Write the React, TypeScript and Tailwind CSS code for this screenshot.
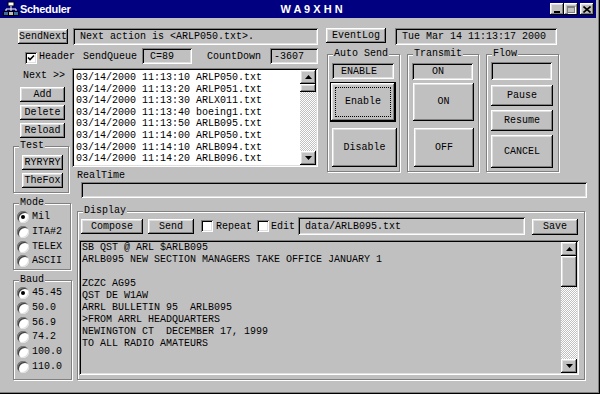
import type { ReactNode } from 'react'

const raised =
  'bg-[#c0c0c0] shadow-[inset_-1px_-1px_#000,inset_1px_1px_#fff,inset_-2px_-2px_#808080,inset_2px_2px_#dfdfdf]'
const sunken =
  'shadow-[inset_1px_1px_#808080,inset_-1px_-1px_#fff,inset_2px_2px_#000,inset_-2px_-2px_#dfdfdf]'

const queue = [
  '03/14/2000 11:13:10 ARLP050.txt',
  '03/14/2000 11:13:20 ARLP051.txt',
  '03/14/2000 11:13:30 ARLX011.txt',
  '03/14/2000 11:13:40 boeing1.txt',
  '03/14/2000 11:13:50 ARLB095.txt',
  '03/14/2000 11:14:00 ARLP050.txt',
  '03/14/2000 11:14:10 ARLB094.txt',
  '03/14/2000 11:14:20 ARLB096.txt',
]

const bulletin = [
  'SB QST @ ARL $ARLB095',
  'ARLB095 NEW SECTION MANAGERS TAKE OFFICE JANUARY 1',
  '',
  'ZCZC AG95',
  'QST DE W1AW',
  'ARRL BULLETIN 95  ARLB095',
  '>FROM ARRL HEADQUARTERS',
  'NEWINGTON CT  DECEMBER 17, 1999',
  'TO ALL RADIO AMATEURS',
]

const Btn = ({ className = '', children }: { className?: string; children?: ReactNode }) => (
  <button type="button" className={`flex shrink-0 items-center justify-center leading-[12px] ${raised} ${className}`}>
    {children}
  </button>
)

const Field = ({ className = '', children }: { className?: string; children?: ReactNode }) => (
  <div className={`flex shrink-0 items-center whitespace-pre bg-[#c0c0c0] ${sunken} ${className}`}>{children}</div>
)

const Group = ({ label, className = '', children }: { label: string; className?: string; children?: ReactNode }) => (
  <div className={`relative shrink-0 border border-[#808080] shadow-[inset_1px_1px_#fff,1px_1px_#fff] ${className}`}>
    <span className="absolute left-[5px] top-[-7px] bg-[#c0c0c0] px-[1px] leading-[12px]">{label}</span>
    {children}
  </div>
)

const Check = ({ checked = false }: { checked?: boolean }) => (
  <div className={`flex h-[12px] w-[12px] shrink-0 items-center justify-center bg-white ${sunken}`}>
    {checked && (
      <svg width="8" height="8" viewBox="0 0 8 8">
        <path d="M1 3.5 L3 5.5 L7 1.5" fill="none" stroke="#000" strokeWidth="1.6" />
      </svg>
    )}
  </div>
)

const Radio = ({ label, checked = false }: { label: string; checked?: boolean }) => (
  <div className="flex h-[14.7px] items-center">
    <div className="ml-[3px] flex h-[12px] w-[12px] items-center justify-center rounded-full bg-white shadow-[inset_1px_1px_#808080,inset_-1px_-1px_#dfdfdf,inset_2px_2px_#404040]">
      {checked && <div className="h-[4px] w-[4px] rounded-full bg-black" />}
    </div>
    <span className="ml-[3px] leading-[12px]">{label}</span>
  </div>
)

const Arrow = ({ down = false }: { down?: boolean }) => (
  <svg width="7" height="4" viewBox="0 0 7 4">
    <polygon points={down ? '0,0 7,0 3.5,4' : '3.5,0 7,4 0,4'} fill="#000" />
  </svg>
)

const VScroll = ({ thumb }: { thumb: number }) => (
  <div className="flex w-[16px] shrink-0 flex-col">
    <div className={`flex h-[14px] items-center justify-center ${raised}`}>
      <Arrow />
    </div>
    <div className={raised} style={{ height: thumb }} />
    <div className="flex-1 bg-[repeating-conic-gradient(#c0c0c0_0%_25%,#ffffff_0%_50%)] bg-size-[2px_2px]" />
    <div className={`flex h-[14px] items-center justify-center ${raised}`}>
      <Arrow down />
    </div>
  </div>
)

const AppIcon = () => (
  <svg width="16" height="16" viewBox="0 0 16 16" className="ml-[3px] shrink-0">
    <rect x="5" y="1" width="6" height="4" fill="#fff" stroke="#000" strokeWidth="1" />
    <path d="M8 5 V8 M3 8 H13 M3 8 V10 M13 8 V10 M8 8 V10" stroke="#fff" strokeWidth="1" />
    <rect x="0.5" y="10.5" width="5" height="4" fill="#3a6ea5" stroke="#000" />
    <rect x="5.5" y="10.5" width="5" height="4" fill="#c0c0c0" stroke="#000" />
    <rect x="10.5" y="10.5" width="5" height="4" fill="#3a6ea5" stroke="#000" />
  </svg>
)

const TitleBar = () => (
  <div className="flex h-[18px] w-[596px] items-center bg-[#000080] font-['Liberation_Sans',Arial,sans-serif] text-[11px] font-bold text-white">
    <AppIcon />
    <span className="ml-[1px] tracking-[-0.3px]">Scheduler</span>
    <span className="ml-[210px]">W A 9 X H N</span>
    <div className="ml-auto mr-[2px] flex items-center">
      <div className={`flex h-[12px] w-[14px] items-end justify-center pb-[2px] ${raised}`}>
        <div className="h-[2px] w-[6px] bg-black" />
      </div>
      <div className={`flex h-[12px] w-[14px] items-center justify-center ${raised}`}>
        <div className="h-[7px] w-[8px] border border-t-2 border-[#808080] shadow-[1px_1px_#fff]" />
      </div>
      <div className={`ml-[2px] flex h-[12px] w-[14px] items-center justify-center ${raised}`}>
        <svg width="8" height="7" viewBox="0 0 8 7">
          <path d="M0.5 0.5 L7.5 6.5 M7.5 0.5 L0.5 6.5" stroke="#000" strokeWidth="1.6" />
        </svg>
      </div>
    </div>
  </div>
)

export default function App() {
  return (
    <div className="h-[394px] w-[600px] overflow-hidden bg-[#c0c0c0] font-['Liberation_Mono','Courier_New',monospace] text-[10px] text-black shadow-[inset_-1px_-1px_#000,inset_-2px_-2px_#808080]">
      <TitleBar />

      <div className="ml-[13px] mt-[10px] grid grid-cols-[59px_248px_275px] grid-rows-[18px_20px_105px_29px_181px]">
        {/* top line: send next + status */}
        <div className="col-span-2 flex items-start">
          <Btn className="ml-[5px] mt-[1px] h-[15px] w-[50px]">SendNext</Btn>
          <Field className="ml-[5px] h-[17px] w-[245px] pl-[7px]">Next action is &lt;ARLP050.txt&gt;.</Field>
        </div>
        <div className="flex items-start">
          <Btn className="ml-[6px] h-[15px] w-[60px]">EventLog</Btn>
          <Field className="ml-[9px] h-[17px] w-[162px] pl-[7px]">Tue Mar 14 11:13:17 2000</Field>
        </div>

        {/* header / queue / countdown */}
        <div className="col-span-2 flex items-start">
          <div className="ml-[12px] mt-[6px]">
            <Check checked />
          </div>
          <span className="ml-[2px] mt-[5px] leading-[12px]">Header</span>
          <span className="ml-[8px] mt-[5px] leading-[12px]">SendQueue</span>
          <Field className="ml-[5px] mt-[2px] h-[16px] w-[50px] pl-[8px]">C=89</Field>
          <span className="ml-[15px] mt-[5px] leading-[12px]">CountDown</span>
          <Field className="ml-[9px] mt-[2px] h-[16px] w-[48px] pl-[4px]">-3607</Field>
        </div>

        {/* auto send / transmit / flow */}
        <div className="row-span-2 flex items-start">
          <Group label="Auto Send" className="ml-[7px] mt-[8px] h-[118px] w-[73px]">
            <Field className="ml-[4px] mt-[8px] h-[16px] w-[62px] pl-[9px]">ENABLE</Field>
            <Btn className="relative ml-[3px] mt-[4px] h-[38px] w-[64px] outline outline-1 outline-black">
              <span className="absolute inset-[4px] border border-dotted border-black" />
              Enable
            </Btn>
            <Btn className="ml-[4px] mt-[7px] h-[39px] w-[65px]">Disable</Btn>
          </Group>
          <Group label="Transmit" className="ml-[7px] mt-[8px] h-[118px] w-[72px]">
            <Field className="ml-[4px] mt-[8px] h-[17px] w-[61px] pl-[20px]">ON</Field>
            <Btn className="ml-[5px] mt-[3px] h-[38px] w-[61px]">ON</Btn>
            <Btn className="ml-[6px] mt-[7px] h-[39px] w-[60px]">OFF</Btn>
          </Group>
          <Group label="Flow" className="ml-[7px] mt-[8px] h-[118px] w-[73px]">
            <Field className="ml-[4px] mt-[7px] h-[18px] w-[61px]" />
            <Btn className="ml-[4px] mt-[5px] h-[21px] w-[62px]">Pause</Btn>
            <Btn className="ml-[4px] mt-[4px] h-[21px] w-[62px]">Resume</Btn>
            <Btn className="ml-[4px] mt-[4px] h-[33px] w-[62px]">CANCEL</Btn>
          </Group>
        </div>

        {/* left column */}
        <div className="row-span-3 flex flex-col items-start">
          <span className="ml-[10px] mt-[4px] leading-[12px]">Next &gt;&gt;</span>
          <Btn className="ml-[7px] mt-[5px] h-[15px] w-[45px]">Add</Btn>
          <Btn className="ml-[7px] mt-[3px] h-[15px] w-[45px]">Delete</Btn>
          <Btn className="ml-[7px] mt-[3px] h-[15px] w-[45px]">Reload</Btn>
          <Group label="Test" className="mt-[8px] h-[47px] w-[56px]">
            <Btn className="ml-[8px] mt-[8px] h-[15px] w-[41px]">RYRYRY</Btn>
            <Btn className="ml-[8px] mt-[3px] h-[15px] w-[41px]">TheFox</Btn>
          </Group>
          <Group label="Mode" className="mt-[10px] h-[67px] w-[58px] pt-[6px]">
            <Radio label="Mil" checked />
            <Radio label="ITA#2" />
            <Radio label="TELEX" />
            <Radio label="ASCII" />
          </Group>
          <Group label="Baud" className="mt-[10px] h-[100px] w-[59px] pt-[5px]">
            <Radio label="45.45" checked />
            <Radio label="50.0" />
            <Radio label="56.9" />
            <Radio label="74.2" />
            <Radio label="100.0" />
            <Radio label="110.0" />
          </Group>
        </div>

        {/* queue list */}
        <div className={`mt-[2px] flex h-[99px] w-[246px] bg-white p-[2px] ${sunken}`}>
          <div className="flex-1 whitespace-pre pl-[2px] pt-[2px] leading-[11.6px]">
            {queue.map((q) => (
              <div key={q}>{q}</div>
            ))}
          </div>
          <VScroll thumb={8} />
        </div>

        {/* realtime */}
        <div className="col-span-2 flex flex-col items-start">
          <span className="ml-[5px] -mt-px h-[12px] leading-[12px]">RealTime</span>
          <Field className="ml-[9px] h-[16px] w-[506px]" />
        </div>

        {/* display */}
        <div className="col-span-2">
          <Group label="Display" className="ml-[5px] mt-[11px] h-[169px] w-[508px]">
            <div className="mt-[7px] flex h-[16px] items-start">
              <Btn className="ml-[3px] h-[15px] w-[62px]">Compose</Btn>
              <Btn className="ml-[5px] h-[15px] w-[46px]">Send</Btn>
              <div className="ml-[7px] mt-[1px]">
                <Check />
              </div>
              <span className="ml-[3px] mt-[2px] leading-[12px]">Repeat</span>
              <div className="ml-[5px] mt-[1px]">
                <Check />
              </div>
              <span className="ml-[2px] mt-[2px] leading-[12px]">Edit</span>
              <Field className="ml-[3px] -mt-[2px] h-[18px] w-[227px] pl-[7px]">data/ARLB095.txt</Field>
              <Btn className="ml-[7px] h-[16px] w-[46px]">Save</Btn>
            </div>
            <div className={`ml-[1px] mt-[5px] flex h-[135px] w-[500px] bg-[#c0c0c0] p-[2px] ${sunken}`}>
              <div className="flex-1 whitespace-pre pl-[1px] leading-[12px]">
                {bulletin.map((l, i) => (
                  <div key={i} className="h-[12px]">
                    {l}
                  </div>
                ))}
              </div>
              <VScroll thumb={31} />
            </div>
          </Group>
        </div>
      </div>
    </div>
  )
}
